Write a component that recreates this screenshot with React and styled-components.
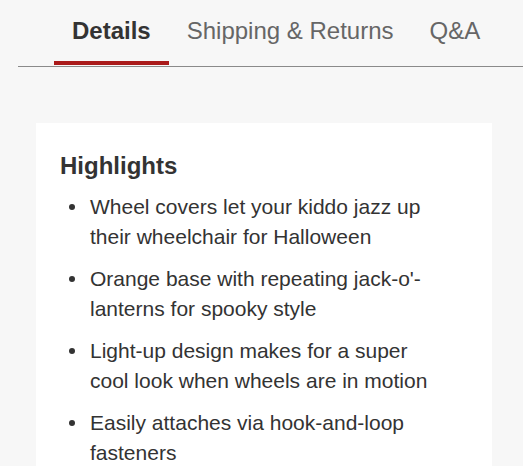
import React from "react";
import styled, { createGlobalStyle } from "styled-components";

const Global = createGlobalStyle`
  html, body { margin: 0; padding: 0; background: #f7f7f7; }
  body { font-family: "Liberation Sans", Arial, Helvetica, sans-serif; color: #333; }
`;

const Page = styled.div`
  display: flex;
  flex-direction: column;
`;

const TabList = styled.div`
  display: flex;
  margin-left: 18px;
  padding-left: 36px;
  border-bottom: 1px solid #8a8a8a;
`;

const Tab = styled.div`
  padding: 16px 18px 15px;
  font-size: 24px;
  line-height: 30px;
  font-weight: ${(p) => (p.$active ? 700 : 400)};
  color: ${(p) => (p.$active ? "#333" : "#666")};
  border-bottom: 4px solid ${(p) => (p.$active ? "#aa1a1a" : "transparent")};
  margin-bottom: 1px;
  white-space: nowrap;
`;

const Card = styled.section`
  margin: 56px 0 0 36px;
  width: 456px;
  background: #fff;
  padding: 28px 44px 40px 24px;
  box-sizing: border-box;
`;

const Heading = styled.h3`
  margin: 0 0 11px;
  font-size: 24px;
  line-height: 30px;
  font-weight: 700;
  color: #333;
`;

const List = styled.ul`
  margin: 0;
  padding: 0;
  list-style: none;
  display: flex;
  flex-direction: column;
  gap: 12px;
`;

const Item = styled.li`
  display: grid;
  grid-template-columns: 30px 1fr;
  font-size: 21px;
  line-height: 30px;
  color: #333;
  &::before {
    content: "";
    width: 6px;
    height: 6px;
    border-radius: 50%;
    background: #333;
    margin: 12px 0 0 9px;
  }
`;

const items = [
  "Wheel covers let your kiddo jazz up their wheelchair for Halloween",
  "Orange base with repeating jack-o'-lanterns for spooky style",
  "Light-up design makes for a super cool look when wheels are in motion",
  "Easily attaches via hook-and-loop fasteners",
];

export default function App() {
  return (
    <Page>
      <Global />
      <TabList>
        <Tab $active>Details</Tab>
        <Tab>Shipping &amp; Returns</Tab>
        <Tab>Q&amp;A</Tab>
      </TabList>
      <Card>
        <Heading>Highlights</Heading>
        <List>
          {items.map((t) => (
            <Item key={t}>
              <span>{t}</span>
            </Item>
          ))}
        </List>
      </Card>
    </Page>
  );
}
